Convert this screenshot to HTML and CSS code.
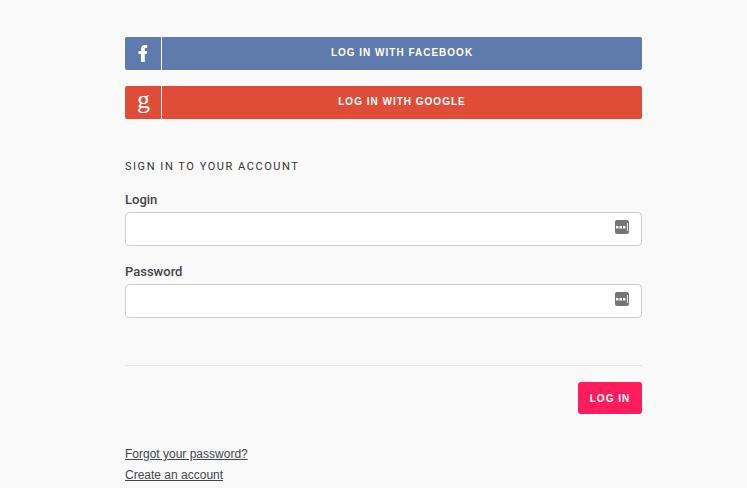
FILE: index.html
```html
<!DOCTYPE html>
<html lang="en">
<head>
    <meta charset="UTF-8">
    <meta name="viewport" content="width=device-width, initial-scale=1.0">
    <title>Log in</title>
    <link rel="stylesheet" href="styles.css">
</head>
<body>
<div class="login-container">
    <a class="social-button facebook" href="#">
        <span class="social-icon icon-f">
            <svg width="10" height="17" viewBox="0 0 10 17">
                <path d="M3 17V9H.5V6H3V4C3 1.5 4.5 0 7 0H9.2V3H7.6C6.9 3 6.8 3.4 6.8 4V6H9.2L8.8 9H6.8V17Z" fill="#fff"/>
            </svg>
        </span>
        <span class="social-text">LOG IN WITH FACEBOOK</span>
    </a>
    <a class="social-button google" href="#">
        <span class="social-icon icon-g">g</span>
        <span class="social-text">LOG IN WITH GOOGLE</span>
    </a>

    <h2 class="section-title">SIGN IN TO YOUR ACCOUNT</h2>

    <label class="field-label" for="login">Login</label>
    <div class="field">
        <input class="field-input" id="login" type="text">
        <svg class="field-icon" width="14" height="14" viewBox="0 0 14 14">
            <rect width="14" height="14" rx="2" fill="#757575"/>
            <rect x="1" y="6" width="2.5" height="2.5" fill="#fff"/>
            <rect x="4.5" y="6" width="2.5" height="2.5" fill="#fff"/>
            <rect x="8" y="6" width="2.5" height="2.5" fill="#fff"/>
            <rect x="12" y="3" width="1" height="8" fill="#e8e8e8"/>
        </svg>
    </div>

    <label class="field-label" for="password">Password</label>
    <div class="field">
        <input class="field-input" id="password" type="password">
        <svg class="field-icon" width="14" height="14" viewBox="0 0 14 14">
            <rect width="14" height="14" rx="2" fill="#757575"/>
            <rect x="1" y="6" width="2.5" height="2.5" fill="#fff"/>
            <rect x="4.5" y="6" width="2.5" height="2.5" fill="#fff"/>
            <rect x="8" y="6" width="2.5" height="2.5" fill="#fff"/>
            <rect x="12" y="3" width="1" height="8" fill="#e8e8e8"/>
        </svg>
    </div>

    <div class="form-actions">
        <button class="submit-button" type="button">LOG IN</button>
    </div>

    <p class="form-link first"><a href="#">Forgot your password?</a></p>
    <p class="form-link"><a href="#">Create an account</a></p>
</div>
</body>
</html>
```

FILE: styles.css
```css
html, body {
    height: 488px;
    overflow: hidden;
}

body {
    background-color: #f9f9f9;
    color: #44444a;
    font-family: "Liberation Sans", Arial, sans-serif;
    margin: 0;
    padding: 0;
}

.login-container {
    width: 517px;
    margin-left: 125px;
    padding-top: 37px;
}

.social-button {
    display: flex;
    height: 33px;
    margin-bottom: 16px;
    border-radius: 2px;
    color: #ffffff;
    text-decoration: none;
}

.facebook {
    background-color: #5f7aad;
}

.google {
    background-color: #df4c37;
}

.social-icon {
    width: 37px;
    box-sizing: border-box;
    border-right: 1px solid #ffffff;
    text-align: center;
    flex-shrink: 0;
}

.icon-f {
    display: flex;
    justify-content: center;
    padding-top: 8px;
}

.icon-g {
    padding-left: 1px;
    font-family: "Liberation Serif", serif;
    font-size: 26px;
    line-height: 27px;
}

.social-text {
    flex: 1;
    text-align: center;
    font-size: 10px;
    font-weight: bold;
    letter-spacing: 1px;
    line-height: 31px;
}

.section-title {
    margin: 41px 0 0;
    color: #333333;
    font-family: Roboto, sans-serif;
    font-size: 11px;
    font-weight: normal;
    letter-spacing: 1.55px;
    line-height: 13px;
}

.field-label {
    display: block;
    margin-top: 20px;
    font-family: Roboto, sans-serif;
    font-size: 13px;
    font-weight: 500;
    line-height: 14px;
}

.field-label + .field {
    margin-top: 5px;
}

.field + .field-label {
    margin-top: 19px;
}

.field {
    position: relative;
    height: 34px;
}

.field-input {
    display: block;
    width: 100%;
    height: 34px;
    box-sizing: border-box;
    background-color: #ffffff;
    border: 1px solid #cccccc;
    border-radius: 4px;
    padding: 0 40px 0 10px;
    outline: none;
}

.field-icon {
    position: absolute;
    right: 13px;
    top: 8px;
}

.form-actions {
    display: flex;
    justify-content: flex-end;
    margin-top: 47px;
    padding-top: 16px;
    border-top: 1px solid #e8e8e8;
}

.submit-button {
    width: 64px;
    height: 32px;
    background-color: #ff1c5c;
    color: #ffffff;
    border: none;
    border-radius: 3px;
    padding: 0;
    font-family: "Liberation Sans", Arial, sans-serif;
    font-size: 10px;
    font-weight: bold;
    letter-spacing: 1px;
}

.form-link {
    margin: 7px 0 0;
    font-size: 12px;
    line-height: 14px;
}

.form-link.first {
    margin-top: 33px;
}

.form-link a {
    color: #44444a;
}
```
